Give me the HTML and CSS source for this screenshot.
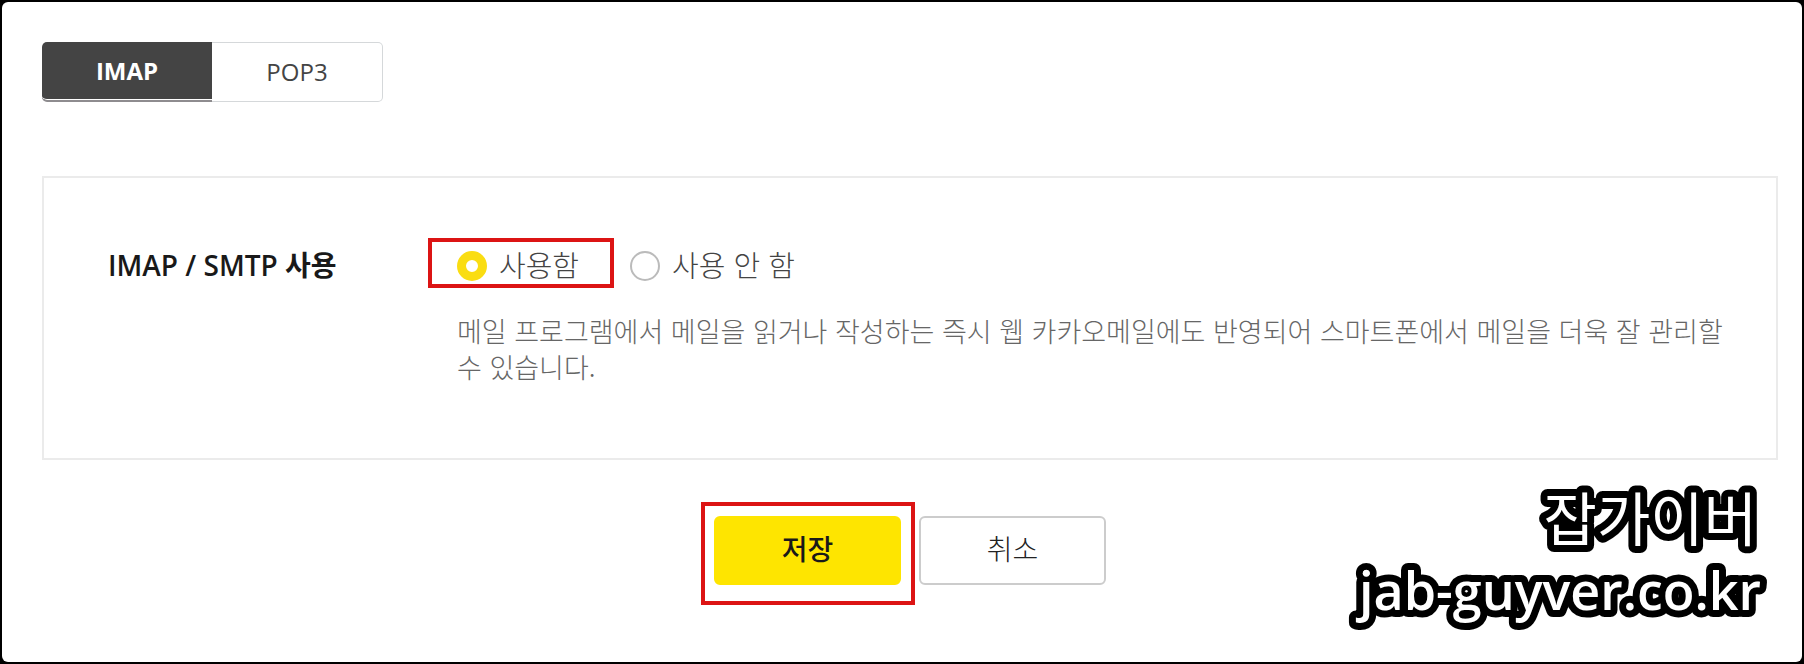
FILE: index.html
```html
<!DOCTYPE html>
<html lang="ko">
<head>
<meta charset="utf-8">
<meta name="viewport" content="width=device-width, initial-scale=1">
<title>IMAP / POP3 설정</title>
<link rel="stylesheet" href="styles.css">
</head>
<body>
<main class="frame">
  <nav class="tabs">
    <button type="button" class="tab tab-active">IMAP</button>
    <button type="button" class="tab">POP3</button>
  </nav>
  <form class="settings">
    <section class="panel">
      <h2 class="panel-title" id="imap-title">IMAP / SMTP 사용</h2>
      <div class="panel-body">
        <div class="options" role="radiogroup" aria-labelledby="imap-title">
          <label class="option marked marked-option"><input class="radio" type="radio" name="imap" value="on" checked><span class="option-text">사용함</span></label>
          <label class="option"><input class="radio" type="radio" name="imap" value="off"><span class="option-text">사용 안 함</span></label>
        </div>
        <p class="description">메일 프로그램에서 메일을 읽거나 작성하는 즉시 웹 카카오메일에도 반영되어 스마트폰에서 메일을 더욱 잘 관리할 수 있습니다.</p>
      </div>
    </section>
    <div class="actions">
      <div class="marked marked-save"><button type="button" class="button button-primary">저장</button></div>
      <button type="button" class="button">취소</button>
    </div>
  </form>
  <svg class="watermark" width="450" height="190" viewBox="0 0 450 190">
    <text class="watermark-name" x="440" y="81" text-anchor="end">잡가이버</text>
    <text class="watermark-url" x="444" y="150" text-anchor="end">jab-guyver.co.kr</text>
  </svg>
</main>
</body>
</html>
```
FILE: styles.css
```css
* { box-sizing: border-box; }

body {
  margin: 0;
  background: #000;
  color: #444;
  font-family: "Open Sans", "Noto Sans CJK KR", sans-serif;
}

button, input { font: inherit; color: inherit; margin: 0; }

.frame {
  position: relative;
  min-height: calc(100vh - 4px);
  margin: 2px;
  padding: 40px 24px 40px 40px;
  background: #fff;
  border-radius: 6px;
}

.tabs { display: flex; }

.tab {
  width: 171px;
  height: 60px;
  padding: 0;
  border: 1px solid #d5d8da;
  border-left: 0;
  border-radius: 0 5px 5px 0;
  background: #fff;
  font-size: 24px;
  line-height: 32px;
}

.tab-active {
  width: 170px;
  border: 0;
  border-bottom: 2px solid #8e8c8f;
  border-radius: 5px 0 0 5px;
  background: #444;
  box-shadow: inset 0 -1px #fff;
  color: #fff;
  font-weight: 700;
}

.panel {
  display: flex;
  align-items: flex-start;
  margin-top: 74px;
  padding: 68px 48px 73px 64px;
  border: 2px solid #ebebeb;
}

.panel-title {
  flex: 0 0 349px;
  margin: 0;
  color: #191919;
  font-size: 28px;
  font-weight: 600;
  line-height: 38px;
}

.panel-body { flex: 1; }

.options { display: flex; gap: 51px; }

.option {
  display: flex;
  align-items: center;
  gap: 12px;
  height: 40px;
  font-family: "Noto Sans CJK KR", sans-serif;
  font-size: 29px;
  font-weight: 300;
  line-height: 36px;
}

.option-text { padding-bottom: 4px; }

.radio {
  appearance: none;
  width: 30px;
  height: 30px;
  border: 2px solid #bbb;
  border-radius: 50%;
  background: #fff;
}

.radio:checked { border: 9px solid #fadd12; }

.description {
  margin: 27px 0 0;
  color: #666;
  font-family: "Noto Sans CJK KR", sans-serif;
  font-size: 27px;
  font-weight: 300;
  line-height: 36px;
  word-break: keep-all;
}

.actions {
  display: flex;
  justify-content: center;
  gap: 18px;
  margin-top: 56px;
}

.button {
  display: block;
  width: 187px;
  height: 69px;
  padding: 0 0 6px;
  border: 2px solid #ccc;
  border-radius: 6px;
  background: #fff;
  color: #222;
  font-family: "Noto Sans CJK KR", sans-serif;
  font-size: 28px;
  font-weight: 300;
  line-height: 40px;
}

.button-primary {
  border-color: #fee500;
  background: #fee500;
  color: #191919;
  font-weight: 500;
}

.marked { position: relative; }

.marked::after {
  content: "";
  position: absolute;
  border: 4px solid #dc1414;
  pointer-events: none;
}

.marked-option::after { inset: -8px -35px -2px -29px; }

.marked-save::after { inset: -14px -14px -20px -13px; }

.watermark {
  position: absolute;
  right: 35px;
  bottom: 12px;
  fill: #fff;
  stroke: #000;
  stroke-width: 14px;
  stroke-linejoin: round;
  paint-order: stroke fill;
}

.watermark-name {
  font-family: "Noto Sans CJK KR", sans-serif;
  font-size: 58px;
  font-weight: 400;
}

.watermark-url {
  font-size: 52px;
  font-weight: 600;
}
```
